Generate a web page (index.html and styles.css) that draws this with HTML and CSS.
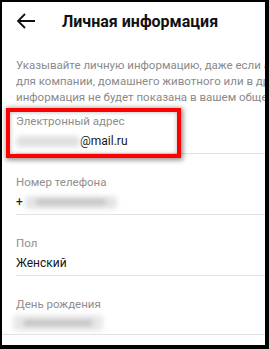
FILE: index.html
```html
<!DOCTYPE html>
<html lang="ru">
<head>
<meta charset="utf-8">
<link rel="stylesheet" href="styles.css">
</head>
<body>
<div class="frame">
  <header class="header">
    <svg class="back" width="20" height="16" viewBox="0 0 20 16">
      <path d="M19 8H2M9 1L2 8l7 7" fill="none" stroke="#111" stroke-width="1.8"/>
    </svg>
    <h1 class="title">Личная информация</h1>
  </header>
  <div class="desc">
    <div class="line">Указывайте личную информацию, даже если аккаунт используется</div>
    <div class="line">для компании, домашнего животного или в других целях. Эта</div>
    <div class="line">информация не будет показана в вашем общедоступном профиле.</div>
  </div>
  <div class="field first">
    <div class="label">Электронный адрес</div>
    <div class="value"><span class="blur b-email"></span>@mail.ru</div>
    <div class="highlight"></div>
  </div>
  <div class="field">
    <div class="label">Номер телефона</div>
    <div class="value">+<span class="blur b-phone"><span class="core"></span></span></div>
  </div>
  <div class="field">
    <div class="label">Пол</div>
    <div class="value">Женский</div>
  </div>
  <div class="field last">
    <div class="label">День рождения</div>
    <div class="value"><span class="blur b-date"><span class="core"></span></span></div>
  </div>
</div>
</body>
</html>
```

FILE: styles.css
```css
html, body {
  margin: 0;
  padding: 0;
  background: #000;
}
.frame {
  box-sizing: border-box;
  width: 269px;
  height: 349px;
  background: #fff;
  border-style: solid;
  border-color: #000;
  border-width: 2px 4px 4px 2px;
  font-family: Roboto, "Noto Sans", sans-serif;
  overflow: hidden;
}
.header {
  height: 38px;
  display: flex;
  align-items: center;
  padding-left: 14px;
}
.back {
  display: block;
}
.title {
  margin: 0 0 0 26px;
  font-size: 16px;
  font-weight: 700;
  color: #111;
  white-space: nowrap;
}
.desc {
  margin-top: 17px;
  padding-left: 14px;
  font-size: 11.5px;
  line-height: 16px;
  color: #8a8a8a;
}
.line {
  white-space: nowrap;
  overflow: hidden;
}
.field {
  position: relative;
  margin-left: 14px;
  padding-top: 20px;
  padding-bottom: 3px;
  border-bottom: 1px solid #e2e2e2;
}
.field.first {
  padding-top: 8px;
}
.field.last {
  margin-left: 0;
  padding-left: 14px;
}
.label {
  font-size: 11.5px;
  line-height: 16px;
  color: #8e8e8e;
  white-space: nowrap;
}
.value {
  margin-top: 3px;
  font-size: 12px;
  line-height: 18px;
  color: #161616;
  white-space: nowrap;
  display: flex;
  align-items: center;
}
.blur {
  display: flex;
  align-items: center;
  justify-content: center;
  height: 11px;
  border-radius: 4px;
  background: #dcdcdc;
  filter: blur(2.5px);
}
.blur .core {
  display: block;
  height: 6px;
  border-radius: 3px;
  background: #b8b8b8;
}
.b-email {
  width: 64px;
  background: #e0e0e0;
}
.b-phone {
  width: 92px;
  height: 13px;
  margin-left: 2px;
  background: #e4e4e4;
}
.b-phone .core {
  width: 70px;
  background: #c4c4c4;
}
.b-date {
  width: 90px;
  height: 16px;
  margin-left: -3px;
  background: #e8e8e8;
}
.b-date .core {
  width: 70px;
  background: #c2c2c2;
}
.highlight {
  position: absolute;
  left: -10px;
  top: 3px;
  width: 175px;
  height: 50px;
  box-sizing: border-box;
  border: 4px solid #ff0000;
  box-shadow: 1px 1px 5px 1px rgba(0, 0, 0, 0.45), inset 0 0 4px rgba(0, 0, 0, 0.3);
}
```
